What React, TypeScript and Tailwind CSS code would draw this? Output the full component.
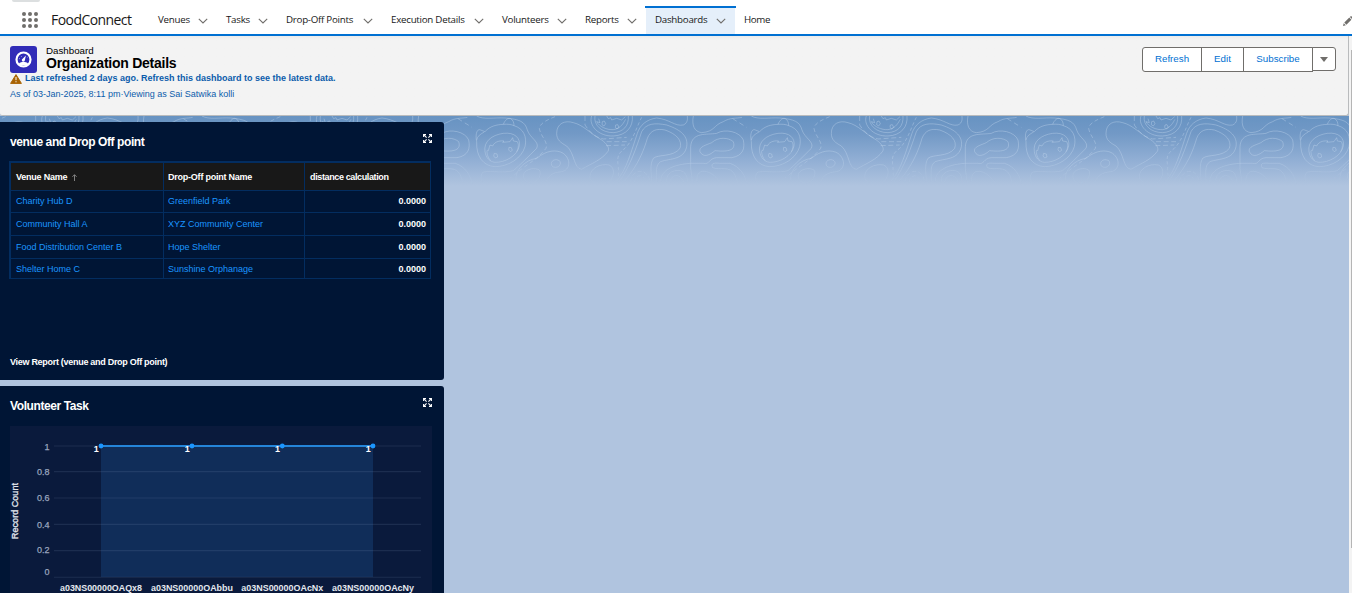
import React from "react";

const tabs = [
  { label: "Venues", width: "w-[68px]" },
  { label: "Tasks", width: "w-[60px]" },
  { label: "Drop-Off Points", width: "w-[105px]" },
  { label: "Execution Details", width: "w-[111px]" },
  { label: "Volunteers", width: "w-[83px]" },
  { label: "Reports", width: "w-[70px]" },
  { label: "Dashboards", width: "w-[89px]", active: true },
];

const rows = [
  { venue: "Charity Hub D", point: "Greenfield Park", height: "h-[22px]", nudge: "" },
  { venue: "Community Hall A", point: "XYZ Community Center", height: "h-[23px]", nudge: "pt-[2px]" },
  { venue: "Food Distribution Center B", point: "Hope Shelter", height: "h-[23px]", nudge: "pt-[2px]" },
  { venue: "Shelter Home C", point: "Sunshine Orphanage", height: "h-[20px]", nudge: "pt-[2px]" },
];

function Chevron() {
  return (
    <svg className="mt-[2px] h-[6px] w-[10px]" viewBox="0 0 10 6" fill="none" stroke="#706e6b" strokeWidth="1.1">
      <path d="M0.8 0.8 L5 5 L9.2 0.8" />
    </svg>
  );
}

function NavBar() {
  return (
    <nav className="relative flex h-[36px] shrink-0 border-b-2 border-[#0070d2] bg-white pl-[22px] font-['Open_Sans',sans-serif] text-[#181818]">
      <div className="absolute left-[12px] top-0 h-[2px] w-[28px] rounded-b-full bg-[#dcdfe0]" />
      <div className="mt-[12px] grid h-[16px] w-[16px] grid-cols-3 gap-[2px]">
        {Array.from({ length: 9 }, (_, i) => (
          <span key={i} className="h-[4px] w-[4px] rounded-full bg-[#706e6b]" />
        ))}
      </div>
      <div className="ml-[13px] mt-[10px] w-[98px] whitespace-nowrap text-[14px] leading-[20px] tracking-[-0.56px]">FoodConnect</div>
      {tabs.map((t) => (
        <div
          key={t.label}
          className={`relative mt-[6px] flex h-[28px] items-center justify-between pl-[9px] pr-[9px] ${t.width} ${t.active ? "bg-[#e5effa]" : ""}`}
        >
          {t.active && <span className="absolute -left-px top-0 h-[2px] w-[91px] bg-[#0070d2]" />}
          <span className="whitespace-nowrap text-[9.75px] leading-[14px] tracking-[-0.26px]">{t.label}</span>
          <Chevron />
        </div>
      ))}
      <div className="mt-[6px] flex h-[28px] items-center pl-[9px] text-[9.75px] leading-[14px] tracking-[-0.4px]">Home</div>
      <svg className="ml-auto mt-[16px] h-[11px] w-[10px]" viewBox="0 0 10 11" fill="#706e6b">
        <path d="M1 10 L1.7 7.2 L3.8 9.3 Z" />
        <path d="M2.3 6.6 L7.3 1.6 L9.4 3.7 L4.4 8.7 Z" />
        <path d="M7.9 1 L9 0 L10 0.8 V3.1 Z" />
      </svg>
    </nav>
  );
}

function PageHeader() {
  const btn = "flex h-[25px] items-center justify-center border border-[#706e6b] bg-white text-[9.75px] text-[#0070d2]";
  return (
    <header className="flex h-[80px] shrink-0 justify-between rounded-b-[3px] border-b border-r border-[#b9bbbd] bg-[#f3f3f3] bg-linear-to-b from-[#ececec] from-0% to-[#f3f3f3] to-5%">
      <div className="pl-[10px] pt-[10px]">
        <div className="flex h-[27px]">
          <div className="flex h-[27px] w-[27px] items-center justify-center rounded-[3px] bg-[#312cb7]">
            <svg className="h-[17px] w-[17px]" viewBox="0 0 17 17">
              <circle cx="8.5" cy="8.5" r="7" fill="none" stroke="#fff" strokeWidth="2.2" />
              <path d="M4 12.2 C6 10.6 11 10.6 13 12.2 L12 14.5 H5 Z" fill="#fff" />
              <path d="M10.9 4.6 L9.8 9.4 A1.5 1.5 0 1 1 7.4 8 Z" fill="#fff" />
              <path d="M4.4 7.6 L5 7.8 M6.2 5.2 L6.6 5.7 M12 6.6 L12.4 6.4" stroke="#fff" strokeWidth="0.8" />
            </svg>
          </div>
          <div className="ml-[9px] text-black">
            <div className="mt-[-2px] text-[9.75px] leading-[13px]">Dashboard</div>
            <div className="whitespace-nowrap text-[14px] font-bold leading-[13px] tracking-[-0.25px]">Organization Details</div>
          </div>
        </div>
        <div className="flex h-[11px] items-center text-[9px] font-bold text-[#0b5cab]">
          <svg className="mt-[1px] h-[10px] w-[12px]" viewBox="0 0 12 10">
            <path d="M6 0.6 L11.4 9.4 H0.6 Z" fill="#a96404" stroke="#a96404" strokeWidth="1" strokeLinejoin="round" />
            <path d="M6 3 V6.2 M6 7.2 V8.3" stroke="#fff" strokeWidth="1" />
          </svg>
          <span className="ml-[3px] whitespace-nowrap leading-[11px]">Last refreshed 2 days ago. Refresh this dashboard to see the latest data.</span>
        </div>
        <div className="mt-[5px] whitespace-nowrap text-[9px] leading-[11px] text-[#0b5cab]">As of 03-Jan-2025, 8:11 pm·Viewing as Sai Satwika kolli</div>
      </div>
      <div className="mr-[12px] mt-[11px] flex">
        <div className={`${btn} w-[60px] rounded-l-[3px]`}>Refresh</div>
        <div className={`${btn} -ml-px w-[43px]`}>Edit</div>
        <div className={`${btn} -ml-px w-[70px]`}>Subscribe</div>
        <div className="-ml-px flex h-[24px] w-[24px] items-center justify-center rounded-r-[3px] border border-[#706e6b] bg-white">
          <svg className="h-[5px] w-[8px]" viewBox="0 0 8 5">
            <path d="M0 0 H8 L4 5 Z" fill="#706e6b" />
          </svg>
        </div>
      </div>
    </header>
  );
}

/* One repeat of the contour-map backdrop, 824 units wide. */
function ContourTile() {
  return (
    <>
      <path d="M110 95 C105 70 112 55 122 60 L135 65 C150 48 170 44 190 43 C195 30 205 22 212 26 C220 30 222 40 222 47 C250 55 262 80 255 110 C245 145 205 170 165 170 C130 168 108 140 110 95Z" />
      <path d="M110 90 C112 78 122 72 133 66 M190 43 C202 42 214 43 222 47" />
      <path d="M135 125 C130 95 155 75 190 70 C225 66 242 85 238 108 C232 138 195 158 165 157 C148 155 138 143 135 125Z" />
      <path d="M152 152 C140 140 138 115 145 122 L150 105 L158 108 C165 92 185 92 192 93 L188 97 L210 95 L218 83 L220 93 L232 95 C238 105 234 118 230 125" />
      <path d="M163 130 l8 2 l2 9 l-7 3 l-5 -6z M207 112 l7 1 l3 8 l-6 4 l-5 -5z" />
      <path d="M110 18 C130 30 165 22 195 24 C240 28 255 35 262 60 C270 85 300 95 290 115 C265 140 240 165 220 182 C190 190 160 182 130 186 C120 195 122 210 128 222" />
      <path d="M345 20 C320 30 300 40 298 55 C302 80 325 95 318 115 C290 150 265 160 235 185 L210 205" strokeDasharray="12 8" />
      <path d="M228 210 C225 180 255 150 290 145 C320 120 350 118 370 130 C395 150 390 180 365 185 C335 188 325 198 318 215" />
      <path d="M334 160 C335 150 348 146 358 152 C366 160 358 172 347 172 C338 172 334 168 334 160Z" />
      <path d="M252 190 C260 176 285 172 298 180 C305 190 298 212 280 218 C260 222 246 208 252 190Z" />
      <path d="M350 70 C350 40 375 30 400 38 C430 45 450 70 485 90 C500 100 510 115 504 124 C485 150 455 160 425 178 C400 175 405 130 380 108 C362 98 350 90 350 70Z" />
      <path d="M450 200 C450 175 480 160 507 165 C530 175 520 210 500 220 M465 218 C455 215 450 208 450 200" />
      <path d="M455 18 C445 45 475 80 520 78 C560 76 580 50 577 18" />
      <path d="M465 18 C460 45 485 68 520 68 C550 66 567 48 565 18" />
      <path d="M476 26 L480 38 L470 35 C478 50 500 60 520 59 C545 55 552 35 557 28 M500 18 L505 26 L512 23 L515 30 L530 25 L545 30 L556 20" />
      <path d="M487 35 l6 -2 l4 8 l-5 7 l-6 -4z M527 45 l6 -1 l4 8 l-6 5 l-5 -5z" />
      <path d="M435 18 V45 C455 75 470 82 490 87 L560 82 M500 95 H560 M498 107 L555 105" strokeDasharray="15 8" />
      <path d="M605 22 C590 50 580 90 555 115 C535 130 530 140 535 170 L536 205" strokeDasharray="10 7" />
      <path d="M528 215 C560 180 575 120 592 70 C600 45 620 28 650 24 C690 28 705 50 730 45 C745 38 742 25 742 18" />
      <path d="M536 218 C570 170 590 110 605 65 C618 40 645 38 680 45 C725 60 745 80 740 110 C732 150 690 145 662 155 C645 165 650 190 650 215" />
      <path d="M552 215 C595 165 612 120 622 85 C632 60 650 55 675 60 C710 72 728 92 720 115 C700 142 655 132 640 145 C628 165 635 190 635 215" />
      <path d="M662 218 C660 185 690 165 750 160 H790 C810 165 805 145 830 143 H875 C910 137 915 115 910 90 C900 65 855 55 830 70 C800 75 755 65 752 110 V175 C755 190 755 205 758 220" />
      <path d="M570 215 C575 190 595 180 610 185 C625 195 630 205 628 215 M583 217 C585 195 605 192 612 205" strokeDasharray="13 6" />
      <path d="M680 218 C675 185 710 175 730 185 C742 195 742 208 742 218 M690 218 C690 195 720 185 732 218" />
      <path d="M780 125 C775 110 800 105 815 98 C835 80 865 82 880 95 C890 125 855 125 825 122 C810 135 790 145 780 125Z" />
      <path d="M770 215 C770 190 780 180 800 185 C820 190 830 205 840 215 M818 173 C812 160 820 158 840 160 H870 C900 170 915 195 920 220 M818 173 C840 182 870 165 885 195 L893 218" />
      <path d="M760 18 C755 45 762 65 785 68 C825 65 820 45 850 35 C870 22 890 26 906 22" />
      <path d="M878 26 L920 52" strokeDasharray="14 10" />
    </>
  );
}

function Backdrop() {
  return (
    <svg className="absolute left-0 top-0 h-[70px] w-[1349px]" viewBox="0 0 1349 70">
      <defs>
        <linearGradient id="sky" x1="0" y1="0" x2="0" y2="1">
          <stop offset="0" stopColor="#6793c2" />
          <stop offset="0.25" stopColor="#7299c6" />
          <stop offset="0.65" stopColor="#93b0d5" />
          <stop offset="1" stopColor="#b0c4df" />
        </linearGradient>
        <linearGradient id="lineFade" x1="0" y1="0" x2="0" y2="1">
          <stop offset="0" stopColor="#fff" />
          <stop offset="0.6" stopColor="#fff" />
          <stop offset="1" stopColor="#000" />
        </linearGradient>
        <mask id="fade">
          <rect width="1349" height="70" fill="url(#lineFade)" />
        </mask>
      </defs>
      <rect width="1349" height="70" fill="url(#sky)" />
      <g mask="url(#fade)">
        <g transform="translate(440 -6) scale(0.33333)" fill="none" stroke="#c3d7ee" strokeOpacity="0.46" strokeWidth="2.6">
          {[-2, -1, 0, 1, 2, 3].map((n) => (
            <g key={n} transform={`translate(${n * 824} 0)`}>
              <ContourTile />
            </g>
          ))}
        </g>
      </g>
    </svg>
  );
}

function ExpandIcon() {
  return (
    <svg className="h-[9px] w-[9px]" viewBox="0 0 9 9" fill="none" stroke="#fff" strokeWidth="1.1">
      <path d="M0.6 3 V0.6 H3 M6 0.6 H8.4 V3 M8.4 6 V8.4 H6 M3 8.4 H0.6 V6" />
      <path d="M0.6 0.6 L3.6 3.6 M8.4 0.6 L5.4 3.6 M8.4 8.4 L5.4 5.4 M0.6 8.4 L3.6 5.4" />
    </svg>
  );
}

function CardTitle({ children }: { children: React.ReactNode }) {
  return (
    <div className="flex justify-between pl-[10px] pr-[12px] pt-[12px] text-white">
      <h2 className="whitespace-nowrap text-[12px] font-bold leading-[16px] tracking-[-0.4px]">{children}</h2>
      <ExpandIcon />
    </div>
  );
}

function VenueCard() {
  const cell = "flex items-center border-b border-r border-[#032d60]";
  return (
    <section className="flex h-[258px] w-[444px] flex-col rounded-r-[3px] bg-[#001535]">
      <CardTitle>venue and Drop Off point</CardTitle>
      <div className="ml-[9px] mt-[11px] w-[422px] border-l-2 border-t-2 border-[#032d60] text-[9px]">
        <div className="grid h-[28px] grid-cols-[153px_141px_126px] bg-[#181818] font-bold tracking-[-0.23px] text-white">
          <div className={`${cell} pl-[5px] pt-[2px]`}>
            <span>Venue Name</span>
            <svg className="ml-[5px] h-[7px] w-[5px]" viewBox="0 0 5 7" fill="none" stroke="#8c8c8c" strokeWidth="0.9">
              <path d="M2.5 7 V0.8 M0.4 2.8 L2.5 0.7 L4.6 2.8" />
            </svg>
          </div>
          <div className={`${cell} pl-[4px] pt-[2px]`}>Drop-Off point Name</div>
          <div className={`${cell} pl-[5px] pt-[2px] tracking-[-0.37px]`}>distance calculation</div>
        </div>
        {rows.map((r) => (
          <div key={r.venue} className={`grid grid-cols-[153px_141px_126px] text-[#1b96ff] ${r.height}`}>
            <div className={`${cell} pl-[5px] ${r.nudge}`}>{r.venue}</div>
            <div className={`${cell} pl-[4px] ${r.nudge}`}>{r.point}</div>
            <div className={`${cell} justify-end pr-[4px] font-bold text-white ${r.nudge}`}>0.0000</div>
          </div>
        ))}
      </div>
      <div className="mb-[12px] ml-[10px] mt-auto text-[9px] font-bold leading-[12px] tracking-[-0.29px] text-white">View Report (venue and Drop Off point)</div>
    </section>
  );
}

const ticks = [
  { label: "1", y: 20, textY: 23.6 },
  { label: "0.8", y: 45.6, textY: 49.3 },
  { label: "0.6", y: 72, textY: 75.2 },
  { label: "0.4", y: 98.4, textY: 101.8 },
  { label: "0.2", y: 124.6, textY: 127.4 },
  { label: "0", y: 151.2, textY: 149.2 },
];

const points = [
  { x: 91, label: "a03NS00000OAQx8" },
  { x: 182, label: "a03NS00000OAbbu" },
  { x: 272.3, label: "a03NS00000OAcNx" },
  { x: 363, label: "a03NS00000OAcNy" },
];

function TaskCard() {
  return (
    <section className="mt-[6px] h-[260px] w-[444px] rounded-tr-[3px] bg-[#001535]">
      <CardTitle>Volunteer Task</CardTitle>
      <svg className="ml-[10px] mt-[12px] h-[200px] w-[422px] bg-[#0a1a3c]" viewBox="0 0 422 200" fontSize="9">
        <rect x="91" y="20" width="272" height="131" fill="#102d59" />
        {ticks.map((t) => (
          <g key={t.label}>
            <path d={`M44 ${t.y} H411`} stroke="#8fa5c8" strokeOpacity="0.14" strokeWidth="1.1" />
            <text x="39.5" y={t.textY} textAnchor="end" fill="#9aa6bf" stroke="#9aa6bf" strokeWidth="0.25">{t.label}</text>
          </g>
        ))}
        <path d="M91 20 H363" stroke="#2585d9" strokeWidth="1.8" />
        {points.map((p) => (
          <g key={p.label} fontWeight="bold" fill="#fff">
            <circle cx={p.x} cy="20" r="2.4" fill="#1b96ff" />
            <text x={p.x - 2.3} y="26.4" textAnchor="end">1</text>
            <text x={p.x} y="165.2" textAnchor="middle" fill="#e4e8ef" textLength="82" lengthAdjust="spacingAndGlyphs">{p.label}</text>
          </g>
        ))}
        <text transform="translate(8.2 85) rotate(-90)" textAnchor="middle" fill="#e4e8ef" stroke="#e4e8ef" strokeWidth="0.3" textLength="56">Record Count</text>
      </svg>
    </section>
  );
}

export default function App() {
  return (
    <div className="flex h-[593px] w-[1352px] flex-col overflow-hidden bg-white font-['Liberation_Sans',Arial,sans-serif]">
      <NavBar />
      <div className="flex min-h-0 flex-1">
        <main className="flex w-[1349px] flex-col bg-[#b0c4df]">
          <PageHeader />
          <div className="relative min-h-0 flex-1">
            <Backdrop />
            <div className="relative pt-[6px]">
              <VenueCard />
              <TaskCard />
            </div>
          </div>
        </main>
        <div className="flex w-[3px] justify-end bg-[#f3f3f3]">
          <div className="mt-[14px] h-[498px] w-[1px] bg-[#b5b5b5]" />
        </div>
      </div>
    </div>
  );
}
